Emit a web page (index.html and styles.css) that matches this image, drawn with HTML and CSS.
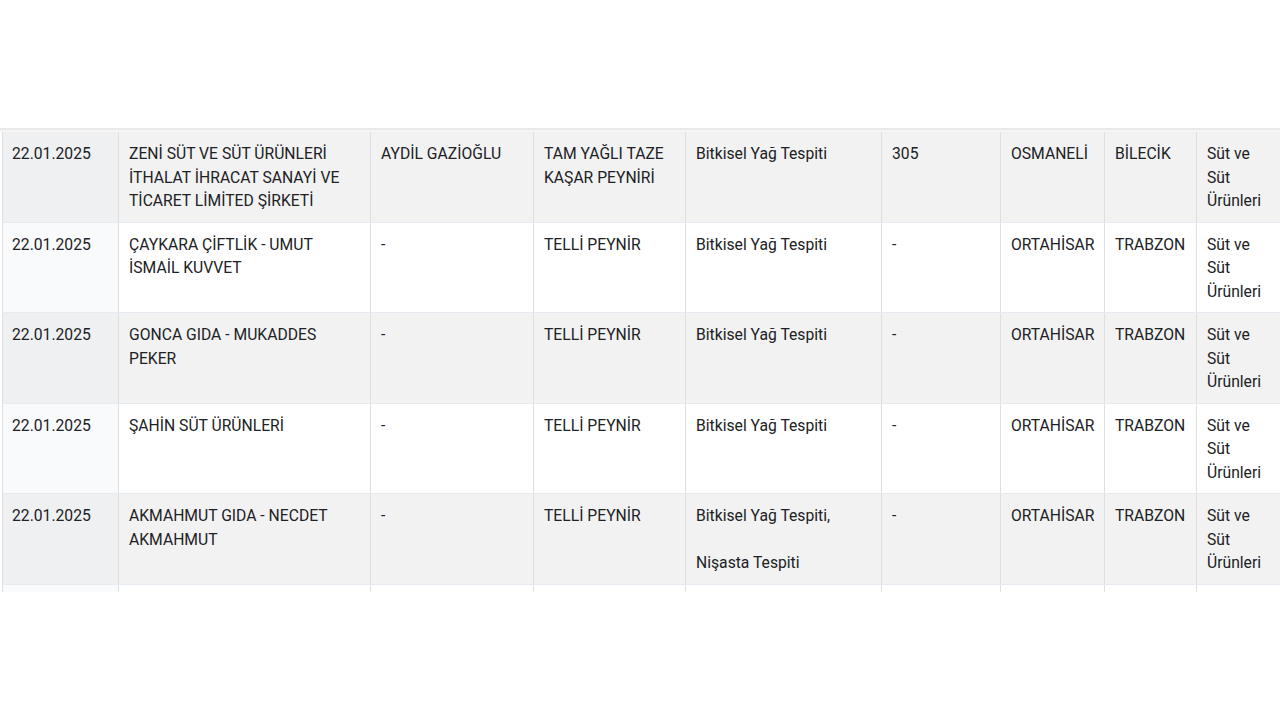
FILE: index.html
```html
<!DOCTYPE html>
<html lang="tr">
<head>
<meta charset="utf-8">
<title>Tablo</title>
<link rel="stylesheet" href="styles.css">
</head>
<body>
<div class="page">
  <div class="table-wrap">
    <table class="data">
      <colgroup>
        <col class="c1"><col class="c2"><col class="c3"><col class="c4"><col class="c5"><col class="c6"><col class="c7"><col class="c8"><col class="c9">
      </colgroup>
      <tbody>
        <tr class="odd">
          <td class="first">22.01.2025</td>
          <td>ZENİ SÜT VE SÜT ÜRÜNLERİ İTHALAT İHRACAT SANAYİ VE TİCARET LİMİTED ŞİRKETİ</td>
          <td>AYDİL GAZİOĞLU</td>
          <td>TAM YAĞLI TAZE KAŞAR PEYNİRİ</td>
          <td>Bitkisel Yağ Tespiti</td>
          <td>305</td>
          <td>OSMANELİ</td>
          <td>BİLECİK</td>
          <td>Süt ve Süt Ürünleri</td>
        </tr>
        <tr>
          <td class="first">22.01.2025</td>
          <td>ÇAYKARA ÇİFTLİK - UMUT İSMAİL KUVVET</td>
          <td>-</td>
          <td>TELLİ PEYNİR</td>
          <td>Bitkisel Yağ Tespiti</td>
          <td>-</td>
          <td>ORTAHİSAR</td>
          <td>TRABZON</td>
          <td>Süt ve Süt Ürünleri</td>
        </tr>
        <tr class="odd">
          <td class="first">22.01.2025</td>
          <td>GONCA GIDA - MUKADDES PEKER</td>
          <td>-</td>
          <td>TELLİ PEYNİR</td>
          <td>Bitkisel Yağ Tespiti</td>
          <td>-</td>
          <td>ORTAHİSAR</td>
          <td>TRABZON</td>
          <td>Süt ve Süt Ürünleri</td>
        </tr>
        <tr>
          <td class="first">22.01.2025</td>
          <td>ŞAHİN SÜT ÜRÜNLERİ</td>
          <td>-</td>
          <td>TELLİ PEYNİR</td>
          <td>Bitkisel Yağ Tespiti</td>
          <td>-</td>
          <td>ORTAHİSAR</td>
          <td>TRABZON</td>
          <td>Süt ve Süt Ürünleri</td>
        </tr>
        <tr class="odd">
          <td class="first">22.01.2025</td>
          <td>AKMAHMUT GIDA - NECDET AKMAHMUT</td>
          <td>-</td>
          <td>TELLİ PEYNİR</td>
          <td>Bitkisel Yağ Tespiti,<br><br>Nişasta Tespiti</td>
          <td>-</td>
          <td>ORTAHİSAR</td>
          <td>TRABZON</td>
          <td>Süt ve Süt Ürünleri</td>
        </tr>
        <tr class="tail">
          <td class="first">&nbsp;</td>
          <td>&nbsp;</td>
          <td>&nbsp;</td>
          <td>&nbsp;</td>
          <td>&nbsp;</td>
          <td>&nbsp;</td>
          <td>&nbsp;</td>
          <td>&nbsp;</td>
          <td>&nbsp;</td>
        </tr>
      </tbody>
    </table>
  </div>
</div>
</body>
</html>
```
FILE: styles.css
```css
html, body {
  margin: 0;
  padding: 0;
  background: #ffffff;
}

body {
  width: 1280px;
  height: 720px;
  overflow: hidden;
  font-family: Roboto, "Liberation Sans", Arial, sans-serif;
  color: #202124;
}

.page {
  padding-top: 128px;
}

.table-wrap {
  position: relative;
  height: 464px;
  overflow: hidden;
  padding-left: 2px;
  width: 1278px;
}

.table-wrap::before {
  content: "";
  position: absolute;
  left: 0;
  right: 0;
  top: 0;
  height: 5px;
  background: linear-gradient(to bottom, rgba(0,0,0,0.10), rgba(0,0,0,0));
  z-index: 2;
}

.data {
  border-collapse: collapse;
  table-layout: fixed;
  width: 1290px;
  font-size: 15.7px;
  line-height: 23.5px;
  margin-top: 4px;
}

.c1 { width: 116px; }
.c2 { width: 252px; }
.c3 { width: 163px; }
.c4 { width: 152px; }
.c5 { width: 196px; }
.c6 { width: 119px; }
.c7 { width: 104px; }
.c8 { width: 92px; }
.c9 { width: 96px; }

.data td {
  vertical-align: top;
  padding: 10px 6px 9px 10px;
  border-left: 1px solid #dfdfdf;
  border-bottom: 1px solid #e6ebf1;
  background: #ffffff;
  word-wrap: break-word;
}

.data td:last-child {
  padding-right: 24px;
}

.data td.first {
  padding-left: 9px;
  background: #f9fafc;
}

.data tr.odd td {
  background: #f2f2f2;
}

.data tr.odd td.first {
  background: #eef0f2;
}
```
